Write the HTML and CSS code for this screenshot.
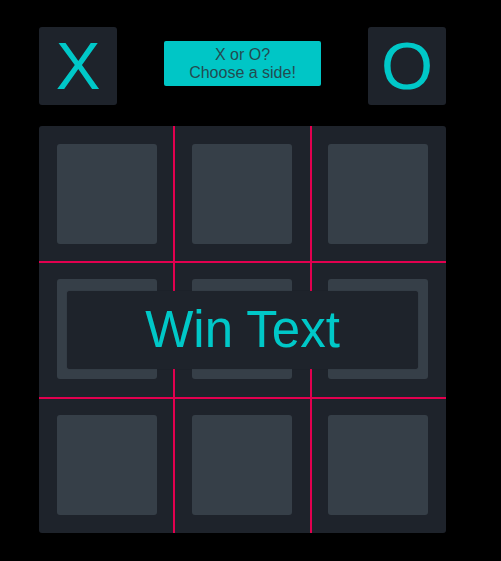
FILE: index.html
```html
<!DOCTYPE html>
<html lang="en">
<head>
<meta charset="utf-8">
<title>Tic Tac Toe</title>
<link rel="stylesheet" href="styles.css">
</head>
<body>
<div class="game">
  <div class="top">
    <div class="side">X</div>
    <div class="prompt">X or O?<br>Choose a side!</div>
    <div class="side">O</div>
  </div>
  <div class="board">
    <div class="cell"><div class="square"></div></div>
    <div class="cell"><div class="square"></div></div>
    <div class="cell"><div class="square"></div></div>
    <div class="cell"><div class="square"></div></div>
    <div class="cell"><div class="square"></div></div>
    <div class="cell"><div class="square"></div></div>
    <div class="cell"><div class="square"></div></div>
    <div class="cell"><div class="square"></div></div>
    <div class="cell"><div class="square"></div></div>
    <div class="win">Win Text</div>
  </div>
</div>
</body>
</html>
```
FILE: styles.css
```css
html, body {
  margin: 0;
  padding: 0;
  background: #000;
  height: 100%;
}
body {
  font-family: "Liberation Sans", Arial, sans-serif;
}
.game {
  width: 407px;
  padding: 27px 0 0 39px;
  display: flex;
  flex-direction: column;
  gap: 21px;
}
.top {
  display: flex;
  justify-content: space-between;
  align-items: flex-start;
}
.side {
  width: 78px;
  height: 78px;
  background: #1e232b;
  border-radius: 3px;
  color: #00c8c8;
  font-size: 67px;
  line-height: 78px;
  text-align: center;
}
.prompt {
  margin-top: 14px;
  width: 157px;
  height: 45px;
  box-sizing: border-box;
  background: #00c6c6;
  border-radius: 2px;
  color: #234b50;
  font-size: 16px;
  line-height: 18px;
  text-align: center;
  display: flex;
  align-items: center;
  justify-content: center;
}
.board {
  position: relative;
  width: 407px;
  height: 407px;
  border-radius: 3px;
  background-color: #1e232b;
  background-image:
    linear-gradient(to right, transparent 134px, #e2004f 134px, #e2004f 136px, transparent 136px, transparent 271px, #e2004f 271px, #e2004f 273px, transparent 273px),
    linear-gradient(to bottom, transparent 135px, #e2004f 135px, #e2004f 137px, transparent 137px, transparent 271px, #e2004f 271px, #e2004f 273px, transparent 273px);
  display: grid;
  grid-template-columns: repeat(3, 1fr);
  grid-template-rows: repeat(3, 1fr);
}
.cell {
  display: flex;
  align-items: center;
  justify-content: center;
}
.square {
  width: 100px;
  height: 100px;
  background: #363f48;
  border-radius: 3px;
}
.win {
  position: absolute;
  left: 28px;
  top: 165px;
  width: 351px;
  height: 78px;
  background: #1e232b;
  border-radius: 3px;
  box-shadow: 0 0 1px rgba(0, 0, 0, 0.4);
  color: #00c8c8;
  font-size: 51px;
  line-height: 78px;
  text-align: center;
}
```
